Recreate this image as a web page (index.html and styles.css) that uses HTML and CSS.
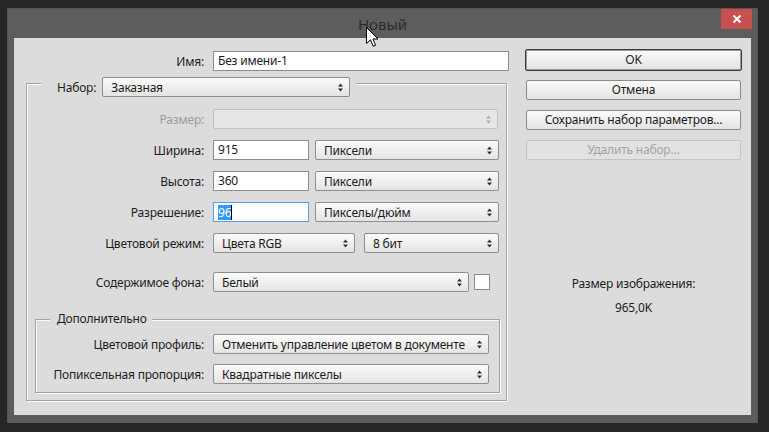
FILE: index.html
```html
<!DOCTYPE html>
<html lang="ru">
<head>
<meta charset="utf-8">
<title>Новый</title>
<link rel="stylesheet" href="styles.css">
</head>
<body>
<div class="window">
  <div class="titlebar">
    <span></span>
    <span class="title">Новый</span>
    <span class="close"><svg width="10" height="10" viewBox="0 0 10 10"><path d="M1.5 1.5 L8.5 8.5 M8.5 1.5 L1.5 8.5" stroke="#fff" stroke-width="2"/></svg></span>
  </div>
  <div class="content">
    <div class="left">
      <div class="row">
        <label class="lbl w-top">Имя:</label>
        <div class="input w-name">Без имени-1</div>
      </div>
      <div class="group outer">
        <div class="legend legend-set">
          <span class="legend-text">Набор:</span>
          <div class="select w-set"><span>Заказная</span><svg class="arr" width="5" height="9" viewBox="0 0 5 9"><path d="M0 3.5 L2.5 0.5 L5 3.5Z M0 5.5 L2.5 8.5 L5 5.5Z"/></svg></div>
        </div>
        <div class="row r-first">
          <label class="lbl w-out disabled">Размер:</label>
          <div class="select disabled w-size"><span></span><svg class="arr" width="5" height="9" viewBox="0 0 5 9"><path d="M0 3.5 L2.5 0.5 L5 3.5Z M0 5.5 L2.5 8.5 L5 5.5Z"/></svg></div>
        </div>
        <div class="row r-next">
          <label class="lbl w-out">Ширина:</label>
          <div class="input w-num">915</div>
          <div class="select w-unit"><span>Пиксели</span><svg class="arr" width="5" height="9" viewBox="0 0 5 9"><path d="M0 3.5 L2.5 0.5 L5 3.5Z M0 5.5 L2.5 8.5 L5 5.5Z"/></svg></div>
        </div>
        <div class="row r-next">
          <label class="lbl w-out">Высота:</label>
          <div class="input w-num">360</div>
          <div class="select w-unit"><span>Пиксели</span><svg class="arr" width="5" height="9" viewBox="0 0 5 9"><path d="M0 3.5 L2.5 0.5 L5 3.5Z M0 5.5 L2.5 8.5 L5 5.5Z"/></svg></div>
        </div>
        <div class="row r-next">
          <label class="lbl w-out">Разрешение:</label>
          <div class="input w-num focus"><span class="sel">96</span><span class="caret"></span></div>
          <div class="select w-unit"><span>Пикселы/дюйм</span><svg class="arr" width="5" height="9" viewBox="0 0 5 9"><path d="M0 3.5 L2.5 0.5 L5 3.5Z M0 5.5 L2.5 8.5 L5 5.5Z"/></svg></div>
        </div>
        <div class="row r-next">
          <label class="lbl w-out">Цветовой режим:</label>
          <div class="select w-mode"><span>Цвета RGB</span><svg class="arr" width="5" height="9" viewBox="0 0 5 9"><path d="M0 3.5 L2.5 0.5 L5 3.5Z M0 5.5 L2.5 8.5 L5 5.5Z"/></svg></div>
          <div class="select w-bit"><span>8 бит</span><svg class="arr" width="5" height="9" viewBox="0 0 5 9"><path d="M0 3.5 L2.5 0.5 L5 3.5Z M0 5.5 L2.5 8.5 L5 5.5Z"/></svg></div>
        </div>
        <div class="row r-bg">
          <label class="lbl w-out">Содержимое фона:</label>
          <div class="select w-bgsel"><span>Белый</span><svg class="arr" width="5" height="9" viewBox="0 0 5 9"><path d="M0 3.5 L2.5 0.5 L5 3.5Z M0 5.5 L2.5 8.5 L5 5.5Z"/></svg></div>
          <div class="swatch"></div>
        </div>
        <div class="group inner">
          <div class="legend legend-adv">Дополнительно</div>
          <div class="row r-adv1">
            <label class="lbl w-in">Цветовой профиль:</label>
            <div class="select w-adv"><span>Отменить управление цветом в документе</span><svg class="arr" width="5" height="9" viewBox="0 0 5 9"><path d="M0 3.5 L2.5 0.5 L5 3.5Z M0 5.5 L2.5 8.5 L5 5.5Z"/></svg></div>
          </div>
          <div class="row r-adv2">
            <label class="lbl w-in">Попиксельная пропорция:</label>
            <div class="select w-adv"><span>Квадратные пикселы</span><svg class="arr" width="5" height="9" viewBox="0 0 5 9"><path d="M0 3.5 L2.5 0.5 L5 3.5Z M0 5.5 L2.5 8.5 L5 5.5Z"/></svg></div>
          </div>
        </div>
      </div>
    </div>
    <div class="right">
      <button class="btn default">OK</button>
      <button class="btn">Отмена</button>
      <button class="btn">Сохранить набор параметров...</button>
      <button class="btn disabled">Удалить набор...</button>
      <div class="info">Размер изображения:</div>
      <div class="info info2">965,0K</div>
    </div>
  </div>
  <svg class="cursor" width="13" height="21" viewBox="0 0 13 21"><path d="M0.5 0.5 L0.5 16.5 L4.5 12.8 L7.2 19.3 L9.6 18.3 L7 12 L12 12 Z" fill="#fff" stroke="#000" stroke-width="1"/></svg>
</div>
</body>
</html>
```
FILE: styles.css
```css
html, body {
  margin: 0;
  padding: 0;
}
body {
  background: #262626;
  width: 769px;
  height: 432px;
  overflow: hidden;
  font-family: "Noto Sans", "DejaVu Sans", sans-serif;
  font-size: 12px;
  letter-spacing: -0.2px;
  color: #1c1c1c;
}
.window {
  position: relative;
  margin: 8px 0 0 7px;
  width: 751px;
  height: 415px;
  background: #5d5d5d;
  box-sizing: border-box;
  border: 1px solid #555;
  border-bottom: none;
}
.titlebar {
  height: 29px;
  display: grid;
  grid-template-columns: 1fr auto 1fr;
  align-items: center;
}
.title {
  font-size: 15px;
  letter-spacing: 0;
  color: #2c2c2c;
  line-height: 20px;
  padding-top: 1px;
}
.close {
  justify-self: end;
  align-self: start;
  width: 31px;
  height: 20px;
  background: #c75050;
  display: flex;
  align-items: center;
  justify-content: center;
  margin-right: 5px;
}
.content {
  margin: 0 6px;
  height: 377px;
  background: #dcdcdc;
  display: flex;
}
.left {
  width: 505px;
  padding-top: 13px;
}
.row {
  display: flex;
  align-items: center;
  height: 20px;
}
.lbl {
  text-align: right;
  margin-right: 9px;
  white-space: nowrap;
}
.lbl.disabled { color: #9b9b9b; }
.w-top { width: 190px; flex: 0 0 190px; }
.w-out { width: 177px; flex: 0 0 177px; }
.w-in { width: 168px; flex: 0 0 168px; }

.input {
  box-sizing: border-box;
  height: 20px;
  background: #fff;
  border: 1px solid #8c8c8c;
  padding-left: 4px;
  line-height: 18px;
  display: flex;
  align-items: center;
}
.input.focus { border-color: #5b9de0; }
.sel {
  background: #3399ff;
  color: #fff;
  line-height: 15px;
}
.caret {
  width: 1px;
  height: 15px;
  background: #000;
}
.select {
  box-sizing: border-box;
  height: 20px;
  border: 1px solid #8e8e8e;
  border-radius: 2px;
  background: linear-gradient(#fbfbfb, #e4e4e4);
  display: flex;
  align-items: center;
  justify-content: space-between;
  padding: 0 6px 0 8px;
  white-space: nowrap;
}
.select.disabled {
  border-color: #c2c2c2;
  background: #e6e6e6;
}
.arr { fill: #2e2e2e; flex: none; }
.select.disabled .arr { fill: #aaa; }

.w-name { width: 296px; }
.w-set { width: 248px; }
.w-size { width: 285px; }
.w-num { width: 96px; margin-right: 6px; }
.w-unit { width: 184px; }
.w-mode { width: 142px; margin-right: 9px; }
.w-bit { width: 135px; }
.w-bgsel { width: 256px; margin-right: 5px; }
.w-adv { width: 276px; }
.swatch {
  box-sizing: border-box;
  width: 16px;
  height: 16px;
  background: #fff;
  border: 1px solid #8c8c8c;
}

.group {
  box-sizing: border-box;
  border: 1px solid #a3a3a3;
  box-shadow: 1px 1px 0 #fafafa, inset 1px 1px 0 #fafafa;
}
.outer {
  margin: 12px 0 0 12px;
  width: 481px;
  height: 318px;
}
.inner {
  margin: 27px 0 0 8px;
  width: 465px;
  height: 74px;
}
.legend {
  background: #dcdcdc;
  display: flex;
  align-items: center;
  width: max-content;
}
.legend-set {
  margin: -7px 0 0 14px;
  padding: 0 6px 0 16px;
  height: 20px;
  gap: 6px;
}
.legend-adv {
  margin: -8px 0 0 14px;
  padding: 0 5px 0 7px;
  height: 14px;
  line-height: 14px;
}
.r-first { margin-top: 12px; }
.r-next { margin-top: 11px; }
.r-bg { margin-top: 19px; }
.r-adv1 { margin-top: 8px; }
.r-adv2 { margin-top: 10px; }

.right {
  width: 217px;
  margin-left: 6px;
  padding-top: 11px;
  display: flex;
  flex-direction: column;
}
.btn {
  box-sizing: border-box;
  width: 215px;
  height: 20px;
  margin: 10px 0 0 1px;
  padding: 0;
  font: inherit;
  letter-spacing: -0.2px;
  color: #1c1c1c;
  border: 1px solid #8a8a8a;
  border-radius: 2px;
  background: linear-gradient(#fbfbfb, #e3e3e3);
  line-height: 18px;
}
.btn.default {
  width: 217px;
  height: 22px;
  margin: 0;
  border: 1px solid #3c3c3c;
  box-shadow: inset 0 0 0 1px #9a9a9a;
}
.btn.default + .btn { margin-top: 9px; }
.btn.disabled {
  color: #a2a2a2;
  border-color: #c4c4c4;
  background: #e2e2e2;
}
.info {
  text-align: center;
  line-height: 16px;
  margin-top: 116px;
}
.info2 { margin-top: 8px; }
.cursor {
  position: absolute;
  left: 358px;
  top: 18px;
}
```
